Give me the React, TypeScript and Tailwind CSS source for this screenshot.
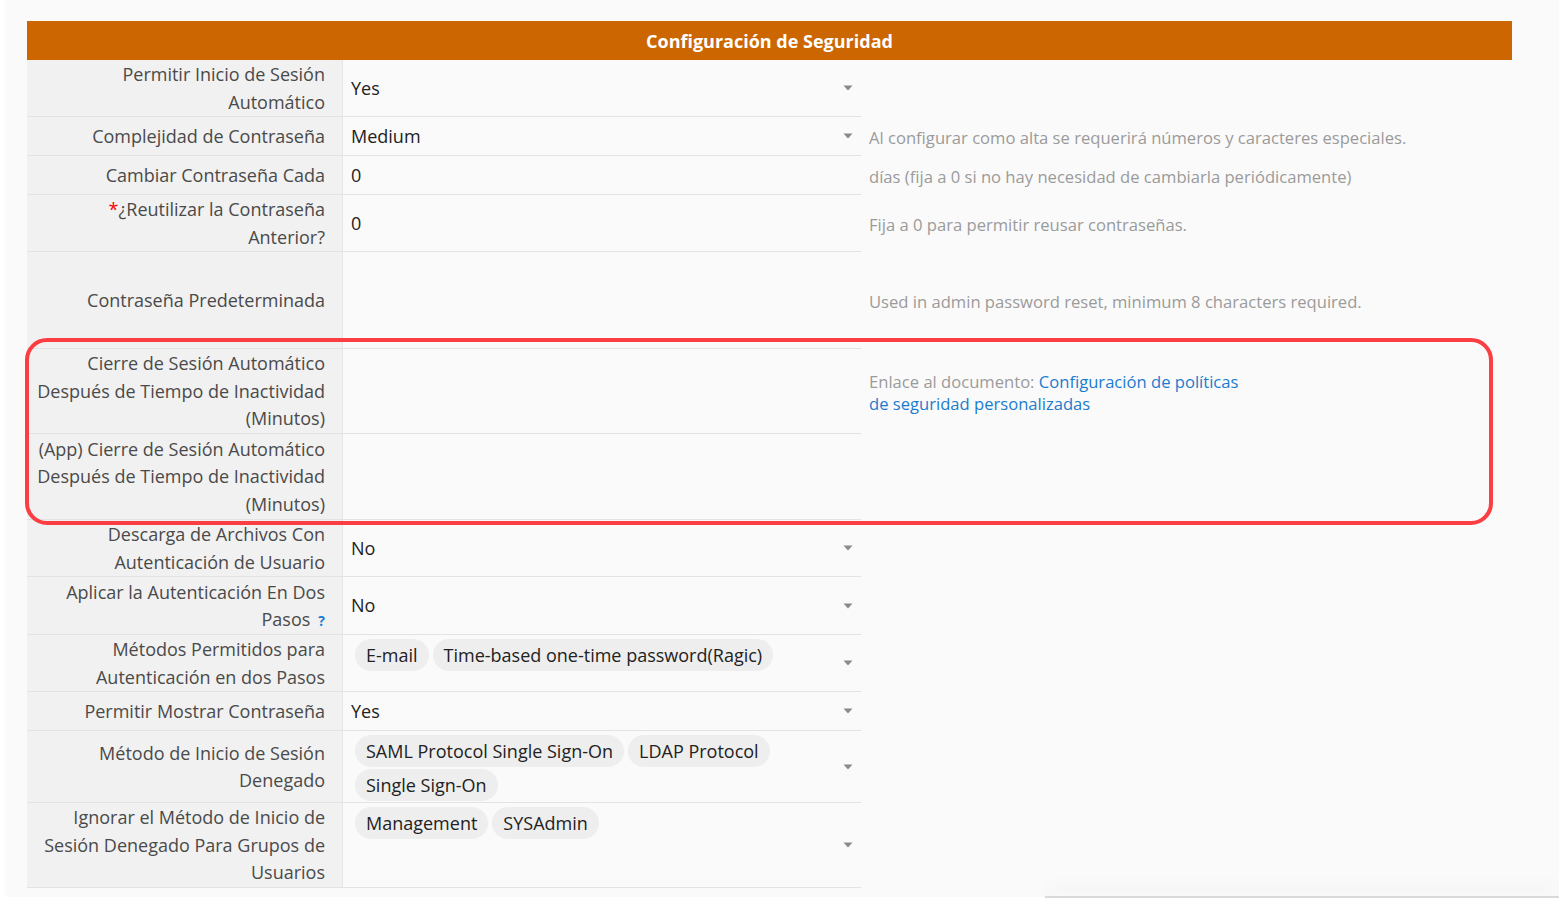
import React from 'react';

type Row = {
  label: React.ReactNode;
  value?: string;
  chips?: string[][];
  select?: boolean;
  hint?: React.ReactNode;
  minH: string;
};

const rows: Row[] = [
  { label: 'Permitir Inicio de Sesión Automático', value: 'Yes', select: true, minH: 'min-h-[56px]' },
  {
    label: 'Complejidad de Contraseña',
    value: 'Medium',
    select: true,
    minH: 'min-h-[38px]',
    hint: 'Al configurar como alta se requerirá números y caracteres especiales.',
  },
  {
    label: 'Cambiar Contraseña Cada',
    value: '0',
    minH: 'min-h-[38px]',
    hint: 'días (fija a 0 si no hay necesidad de cambiarla periódicamente)',
  },
  {
    label: (
      <>
        <span className="text-[#ff0000]">*</span>¿Reutilizar la Contraseña Anterior?
      </>
    ),
    value: '0',
    minH: 'min-h-[56px]',
    hint: 'Fija a 0 para permitir reusar contraseñas.',
  },
  {
    label: 'Contraseña Predeterminada',
    minH: 'min-h-[96px]',
    hint: 'Used in admin password reset, minimum 8 characters required.',
  },
  {
    label: 'Cierre de Sesión Automático Después de Tiempo de Inactividad (Minutos)',
    minH: 'min-h-[84px]',
    hint: (
      <span className="block max-w-[380px] leading-[22px]">
        Enlace al documento:{' '}
        <a className="text-[#1a7ccf]">Configuración de políticas de seguridad personalizadas</a>
      </span>
    ),
  },
  {
    label: '(App) Cierre de Sesión Automático Después de Tiempo de Inactividad (Minutos)',
    minH: 'min-h-[85px]',
  },
  {
    label: 'Descarga de Archivos Con Autenticación de Usuario',
    value: 'No',
    select: true,
    minH: 'min-h-[56px]',
  },
  {
    label: (
      <>
        Aplicar la Autenticación En Dos Pasos
        <span className="ml-[8px] inline-block text-[14px] font-bold leading-none text-[#1a7ccf]">?</span>
      </>
    ),
    value: 'No',
    select: true,
    minH: 'min-h-[57px]',
  },
  {
    label: 'Métodos Permitidos para Autenticación en dos Pasos',
    chips: [['E-mail', 'Time-based one-time password(Ragic)']],
    select: true,
    minH: 'min-h-[56px]',
  },
  { label: 'Permitir Mostrar Contraseña', value: 'Yes', select: true, minH: 'min-h-[38px]' },
  {
    label: 'Método de Inicio de Sesión Denegado',
    chips: [['SAML Protocol Single Sign-On', 'LDAP Protocol'], ['Single Sign-On']],
    select: true,
    minH: 'min-h-[71px]',
  },
  {
    label: 'Ignorar el Método de Inicio de Sesión Denegado Para Grupos de Usuarios',
    chips: [['Management', 'SYSAdmin']],
    select: true,
    minH: 'min-h-[84px]',
  },
];

function Caret() {
  return (
    <svg width="10" height="6" viewBox="0 0 10 6" className="shrink-0">
      <path d="M0.5 0.5 L9.5 0.5 L5 5.5 Z" fill="#8a8a8a" />
    </svg>
  );
}

export default function App() {
  return (
    <div
      className="min-h-[899px] bg-white"
      style={{ fontFamily: '"Open Sans", "Noto Sans", sans-serif' }}
    >
      <div className="relative ml-[5px] h-[897px] bg-[#fafafa] pl-[22px] pr-[47px] pt-[21px]">
        {/* Header */}
        <div className="flex h-[39px] items-center justify-center bg-[#cc6600] pt-[2px] text-[18px] font-bold text-white">
          Configuración de Seguridad
        </div>

        {/* Rows */}
        {rows.map((row, i) => (
          <div key={i} className="flex">
            <div className="flex w-[834px] shrink-0 border-b border-[#e3e3e3]">
              <div
                className={`flex w-[316px] shrink-0 items-center justify-end border-r border-[#e6e6e6] bg-[#f1f1f1] pl-[8px] pr-[17px] pt-[1px] text-right text-[18px] leading-[27.5px] text-[#4a4a4a] ${row.minH}`}
              >
                <span>{row.label}</span>
              </div>
              <div className="flex flex-1 items-center justify-between pl-[8px] pr-[8px]">
                {row.chips ? (
                  <div className="flex flex-col gap-[2px] self-start pl-[4px] pt-[4px]">
                    {row.chips.map((line, j) => (
                      <div key={j} className="flex gap-[4px]">
                        {line.map((c) => (
                          <span
                            key={c}
                            className="rounded-full bg-[#eeeeee] px-[11px] text-[18px] leading-[32px] text-[#222]"
                          >
                            {c}
                          </span>
                        ))}
                      </div>
                    ))}
                  </div>
                ) : (
                  <span className="text-[18px] text-[#222]">{row.value}</span>
                )}
                {row.select && <Caret />}
              </div>
            </div>
            <div className="flex flex-1 items-center pl-[8px] pt-[3px] text-[16.6px] text-[#9b9b9b]">
              {row.hint}
            </div>
          </div>
        ))}

        {/* Red highlight annotation */}
        <div className="pointer-events-none absolute left-[20px] top-[338px] h-[187px] w-[1468px] rounded-[22px] border-4 border-[#fb3e42]" />

        {/* Floating panel edge at the bottom */}
        <div className="absolute bottom-[-1px] left-[1040px] right-0 h-[2px] bg-[#d9d9d9] shadow-[0_-8px_16px_rgba(0,0,0,0.12)]" />
      </div>
    </div>
  );
}
